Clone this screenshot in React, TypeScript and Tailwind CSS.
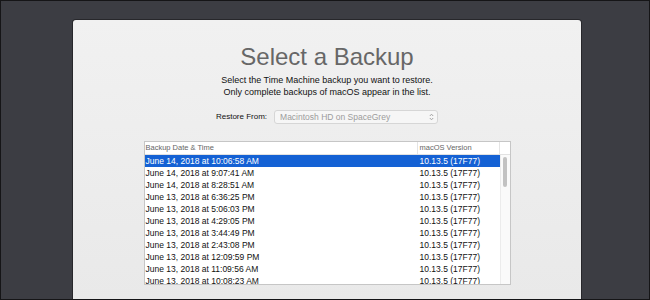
import React from "react";

const rows = [
  "June 14, 2018 at 10:06:58 AM",
  "June 14, 2018 at 9:07:41 AM",
  "June 14, 2018 at 8:28:51 AM",
  "June 13, 2018 at 6:36:25 PM",
  "June 13, 2018 at 5:06:03 PM",
  "June 13, 2018 at 4:29:05 PM",
  "June 13, 2018 at 3:44:49 PM",
  "June 13, 2018 at 2:43:08 PM",
  "June 13, 2018 at 12:09:59 PM",
  "June 13, 2018 at 11:09:56 AM",
  "June 13, 2018 at 10:08:23 AM",
];

export default function App() {
  return (
    <div
      className="w-[650px] h-[300px] bg-[#3c3d43] border border-[#151517] overflow-hidden"
      style={{ fontFamily: '"Liberation Sans", Arial, sans-serif' }}
    >
      <div className="ml-[72px] mt-[19px] w-[508px] h-[280px] rounded-t-[3px] bg-gradient-to-b from-[#f1f1f1] to-[#e9e9e9] shadow-[0_0_0_1px_rgba(0,0,0,0.35)] flex flex-col items-center pt-[25px]">
        <div className="text-[24px] leading-[24px] text-[#676767]">Select a Backup</div>
        <div className="mt-[5px] text-[9px] leading-[12px] text-[#111] text-center">
          <div>Select the Time Machine backup you want to restore.</div>
          <div>Only complete backups of macOS appear in the list.</div>
        </div>
        <div className="mt-[12px] flex items-center gap-[7px] h-[14px]">
          <span className="text-[8px] text-[#111]">Restore From:</span>
          <div className="w-[164px] h-[14px] rounded-[3px] border border-[#d6d6d6] bg-[#f6f6f6] flex items-center justify-between pl-[5px] pr-[3px]">
            <span className="text-[8.5px] text-[#9c9c9c]">Macintosh HD on SpaceGrey</span>
            <svg width="5" height="8" viewBox="0 0 5 8" fill="none" stroke="#9a9a9a" strokeWidth="0.9">
              <path d="M0.8 3 L2.5 1.2 L4.2 3" />
              <path d="M0.8 5 L2.5 6.8 L4.2 5" />
            </svg>
          </div>
        </div>
        <div className="mt-[17px] w-[367px] h-[144px] border border-[#c6c6c6] bg-white flex flex-col overflow-hidden">
          <div className="flex h-[13px] shrink-0 border-b border-[#e2e2e2] text-[7.5px] text-[#666] items-center">
            <div className="w-[273px] pl-[1px] h-full flex items-center border-r border-[#e4e4e4]">Backup Date &amp; Time</div>
            <div className="w-[82px] pl-[2px] h-full flex items-center border-r border-[#e4e4e4]">macOS Version</div>
            <div className="flex-1" />
          </div>
          <div className="flex flex-1 overflow-hidden">
            <div className="w-[355px] flex flex-col">
              {rows.map((r, i) => (
                <div
                  key={r}
                  className={
                    i === 0
                      ? "flex h-[12px] shrink-0 items-center text-[8.5px] bg-[#1461d4] text-white"
                      : "flex h-[12px] shrink-0 items-center text-[8.5px] text-[#111]"
                  }
                >
                  <div className="w-[273px] pl-[1px]">{r}</div>
                  <div className="w-[82px] pl-[2px]">10.13.5 (17F77)</div>
                </div>
              ))}
            </div>
            <div className="flex-1 border-l border-[#ececec] bg-[#fafafa] flex justify-center pt-[2px]">
              <div className="w-[4px] h-[30px] rounded-full bg-[#c2c2c2]" />
            </div>
          </div>
        </div>
      </div>
    </div>
  );
}
